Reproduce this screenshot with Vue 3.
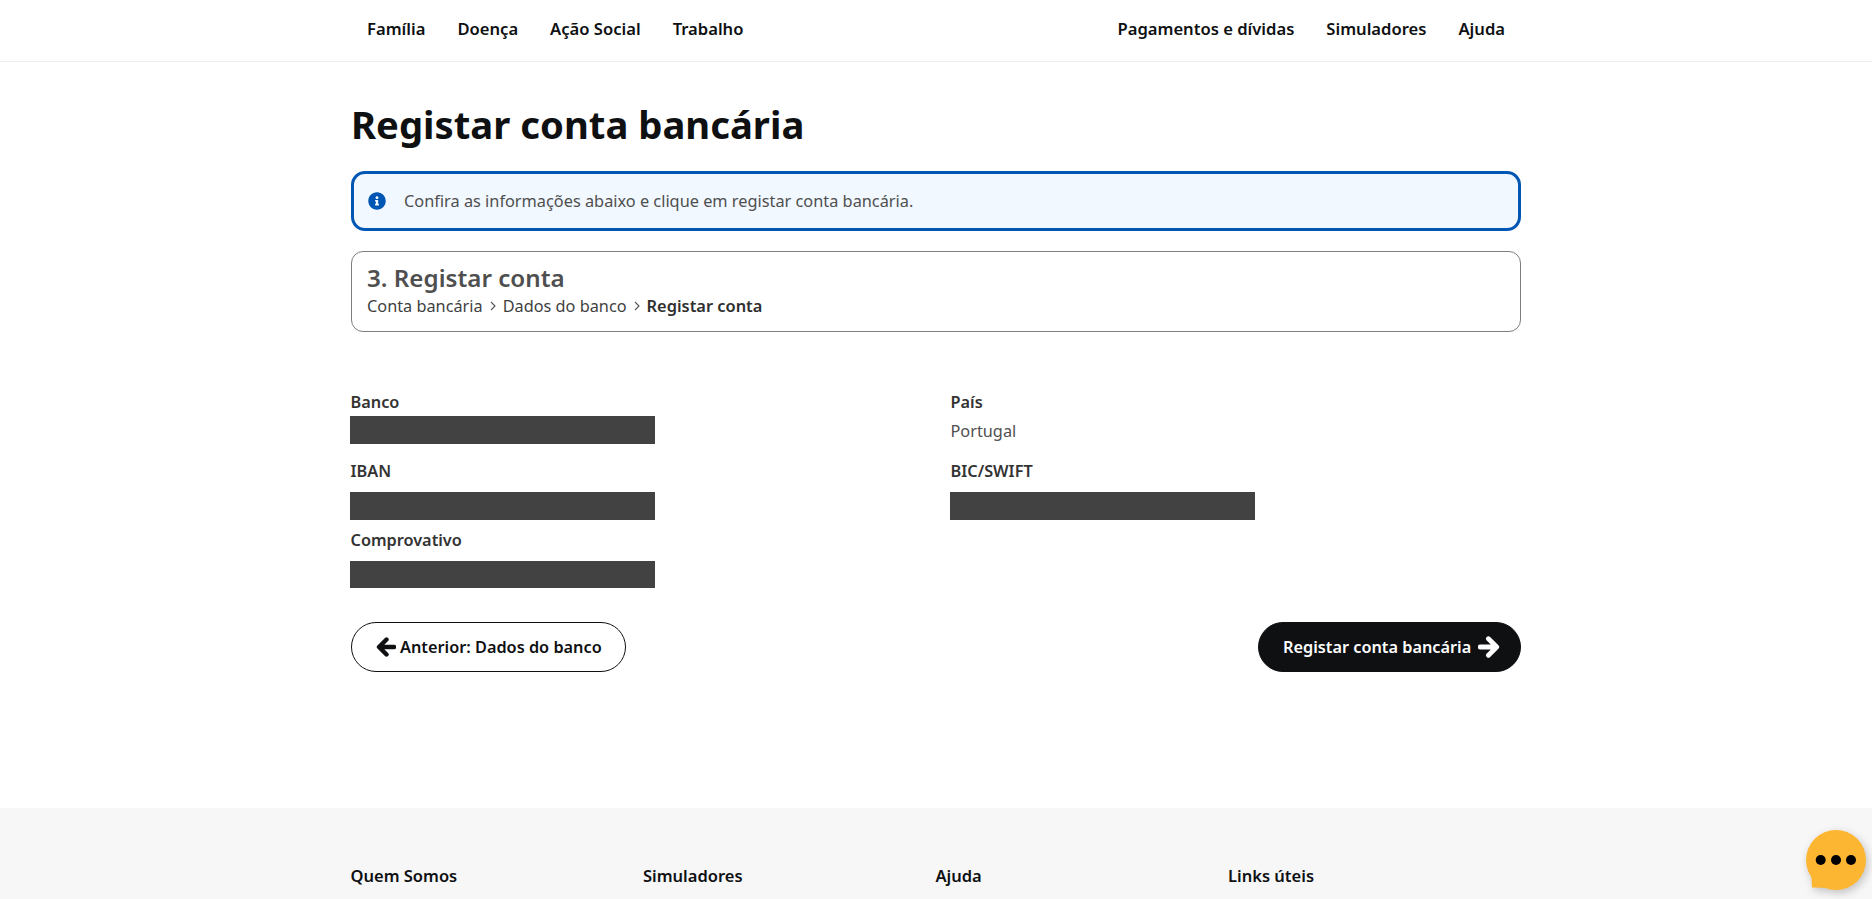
<script setup>
const navLeft = ['Família', 'Doença', 'Ação Social', 'Trabalho']
const navRight = ['Pagamentos e dívidas', 'Simuladores', 'Ajuda']
const footer = ['Quem Somos', 'Simuladores', 'Ajuda', 'Links úteis']
</script>

<template>
  <div class="page">
    <header class="topbar">
      <nav class="nav">
        <div class="nav-group">
          <a v-for="n in navLeft" :key="n" class="nav-link">{{ n }}</a>
        </div>
        <div class="nav-group">
          <a v-for="n in navRight" :key="n" class="nav-link">{{ n }}</a>
        </div>
      </nav>
    </header>

    <main class="main">
      <h1 class="title">Registar conta bancária</h1>

      <div class="alert">
        <svg class="alert-icon" viewBox="0 0 512 512"><path fill="#0056b3" d="M256 8C119.043 8 8 119.083 8 256c0 136.997 111.043 248 248 248s248-111.003 248-248C504 119.083 392.957 8 256 8zm0 110c23.196 0 42 18.804 42 42s-18.804 42-42 42-42-18.804-42-42 18.804-42 42-42zm56 254c0 6.627-5.373 12-12 12h-88c-6.627 0-12-5.373-12-12v-24c0-6.627 5.373-12 12-12h12v-64h-12c-6.627 0-12-5.373-12-12v-24c0-6.627 5.373-12 12-12h64c6.627 0 12 5.373 12 12v100h12c6.627 0 12 5.373 12 12v24z"/></svg>
        <span>Confira as informações abaixo e clique em registar conta bancária.</span>
      </div>

      <section class="steps">
        <h2 class="step-title">3. Registar conta</h2>
        <div class="crumbs">
          <span>Conta bancária</span>
          <svg class="chev" viewBox="0 0 8 12"><path d="M2 2l4 4-4 4" fill="none" stroke="#555" stroke-width="1.1"/></svg>
          <span>Dados do banco</span>
          <svg class="chev" viewBox="0 0 8 12"><path d="M2 2l4 4-4 4" fill="none" stroke="#555" stroke-width="1.1"/></svg>
          <strong>Registar conta</strong>
        </div>
      </section>

      <section class="details">
        <div class="col">
          <div class="field">
            <div class="label">Banco</div>
            <div class="redact r-tight"></div>
          </div>
          <div class="field">
            <div class="label">IBAN</div>
            <div class="redact"></div>
          </div>
          <div class="field f-last">
            <div class="label">Comprovativo</div>
            <div class="redact r-last"></div>
          </div>
        </div>
        <div class="col">
          <div class="field">
            <div class="label">País</div>
            <div class="value">Portugal</div>
          </div>
          <div class="field">
            <div class="label">BIC/SWIFT</div>
            <div class="redact"></div>
          </div>
        </div>
      </section>

      <div class="actions">
        <button class="btn btn-outline">
          <svg class="arrow" viewBox="0 0 20 20"><path d="M10.500 2.500L3 10l7.500 7.500M3.500 10h14.500" fill="none" stroke="#0e1012" stroke-width="4.400" stroke-linecap="round" stroke-linejoin="round"/></svg>
          Anterior: Dados do banco
        </button>
        <button class="btn btn-solid">
          Registar conta bancária
          <svg class="arrow arrow-lg" viewBox="0 0 20 20"><path d="M9.500 2.500L17 10l-7.500 7.500M16.500 10H2" fill="none" stroke="#fff" stroke-width="4.400" stroke-linecap="round" stroke-linejoin="round"/></svg>
        </button>
      </div>
    </main>

    <footer class="footer">
      <div class="footer-grid">
        <div v-for="f in footer" :key="f" class="footer-head">{{ f }}</div>
      </div>
    </footer>

    <button class="chat" aria-label="Chat">
      <svg viewBox="0 0 60 60" width="60" height="60">
        <circle cx="30" cy="30" r="30" fill="#fcb632"/>
        <path d="M5 38L6 57.500L25 58z" fill="#fcb632"/>
        <circle cx="14.700" cy="30" r="5" fill="#000"/>
        <circle cx="30" cy="30" r="5" fill="#000"/>
        <circle cx="45" cy="30" r="5" fill="#000"/>
      </svg>
    </button>
  </div>
</template>

<style>
html, body { margin: 0; overflow: hidden; background: #fff; }
</style>

<style scoped>
.page {
  height: 899px;
  overflow: hidden;
  display: flex;
  flex-direction: column;
  font-family: "Noto Sans", sans-serif;
  color: #0e1012;
}
.topbar {
  border-bottom: 1px solid #ececec;
  height: 61px;
  flex: none;
}
.nav {
  width: 1170px;
  margin: 0 auto;
  height: 58px;
  display: flex;
  justify-content: space-between;
  align-items: center;
}
.nav-group { display: flex; }
.nav-link {
  padding: 0 16px;
  font-size: 16.600px;
  font-weight: 600;
  line-height: 22px;
}
.main {
  width: 1170px;
  margin: 0 auto;
  flex: 1;
}
.title {
  margin: 36px 0 0;
  font-size: 38.250px;
  line-height: 52px;
  font-weight: 700;
}
.alert {
  margin-top: 21px;
  height: 60px;
  box-sizing: border-box;
  border: 3px solid #0056b3;
  border-radius: 14px;
  background: #f1f8ff;
  display: flex;
  align-items: center;
  padding-left: 14px;
  gap: 18px;
  font-size: 16.320px;
  color: #4f4f4f;
}
.alert-icon { width: 18px; height: 18px; flex: none; }
.steps {
  margin-top: 20px;
  height: 81px;
  box-sizing: border-box;
  border: 1px solid #7d7d7d;
  border-radius: 12px;
  padding: 11px 15px;
}
.step-title {
  margin: 0;
  font-size: 24.200px;
  line-height: 30px;
  font-weight: 600;
  color: #4f4f4f;
}
.crumbs {
  display: flex;
  align-items: center;
  font-size: 16.300px;
  line-height: 22px;
  margin-top: 2px;
  color: #3f3f3f;
  gap: 3px;
}
.crumbs strong { font-weight: 600; color: #2f2f2f; font-size: 16.400px; }
.chev { width: 12px; height: 12px; margin: 0 1px; }
.details {
  margin-top: 59px;
  display: grid;
  grid-template-columns: 1fr 1fr;
  column-gap: 30px;
}
.col { display: flex; flex-direction: column; }
.field { height: 69px; }
.f-last { height: 59px; }
.label {
  font-size: 16.300px;
  font-weight: 600;
  line-height: 22px;
  color: #333;
  margin-left: -0.5px;
}
.value {
  font-size: 16.300px;
  line-height: 24px;
  color: #4f4f4f;
  margin-top: 6px;
  margin-left: -0.5px;
}
.redact {
  width: 305px;
  height: 28px;
  background: #424242;
  margin-top: 10px;
  margin-left: -1px;
}
.r-tight { margin-top: 3px; }
.r-last { height: 27px; }
.actions {
  margin-top: 34px;
  display: flex;
  justify-content: space-between;
}
.btn {
  height: 50px;
  box-sizing: border-box;
  border-radius: 25px;
  font-family: inherit;
  font-size: 16.300px;
  font-weight: 600;
  display: flex;
  align-items: center;
  cursor: pointer;
}
.btn-outline {
  background: #fff;
  color: #0e1012;
  border: 1px solid #0e1012;
  padding: 0 0 0 24px;
  gap: 4px;
  width: 275px;
}
.btn-solid {
  background: #0e1012;
  color: #fff;
  border: 1px solid #0e1012;
  padding: 0 0 0 24px;
  gap: 7px;
  width: 263px;
}
.arrow { width: 20px; height: 20px; flex: none; }
.arrow-lg { width: 22px; height: 22px; }
.footer {
  background: #f7f7f7;
  height: 91px;
  flex: none;
}
.footer-grid {
  width: 1170px;
  margin: 0 auto;
  display: grid;
  grid-template-columns: repeat(4, 1fr);
  padding-top: 57px;
}
.footer-head {
  font-size: 16.500px;
  font-weight: 600;
  line-height: 22px;
  margin-left: -0.5px;
}
.chat {
  position: fixed;
  left: 1806px;
  top: 830px;
  width: 60px;
  height: 60px;
  padding: 0;
  border: 0;
  background: none;
  filter: drop-shadow(2px 3px 4px rgba(0,0,0,.22));
}
.chat svg { display: block; }
</style>
